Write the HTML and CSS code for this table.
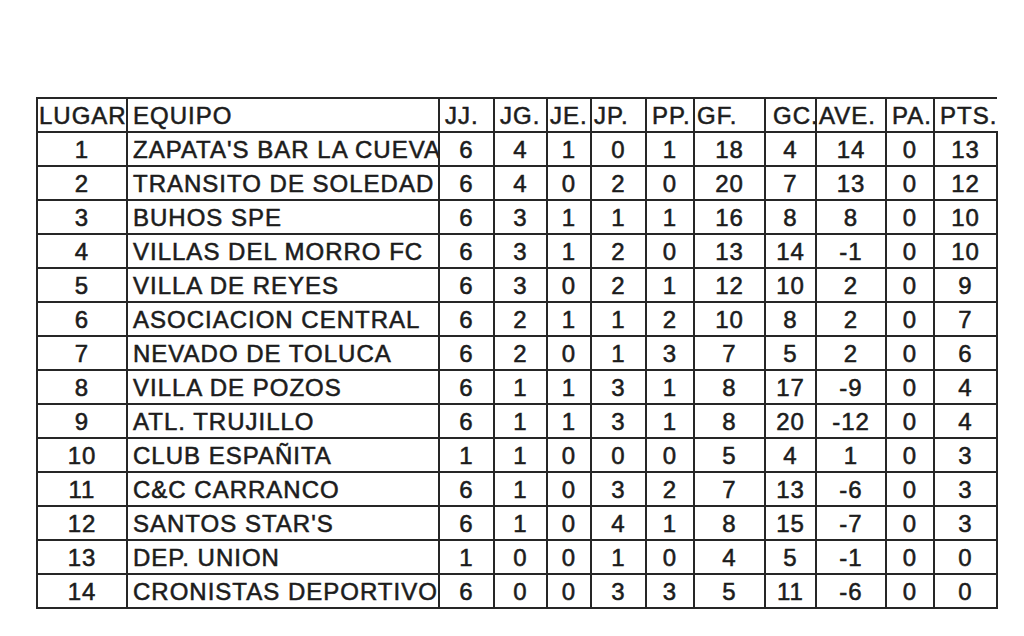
FILE: index.html
```html
<!DOCTYPE html>
<html lang="es">
<head>
<meta charset="utf-8">
<title>Tabla de posiciones</title>
<link rel="stylesheet" href="styles.css">
</head>
<body>
<div class="sheet">
  <table class="standings">
    <colgroup>
      <col class="c-pos"><col class="c-team"><col class="c-jj"><col class="c-jg"><col class="c-je"><col class="c-jp"><col class="c-pp"><col class="c-gf"><col class="c-gc"><col class="c-ave"><col class="c-pa"><col class="c-pts">
    </colgroup>
    <thead>
      <tr>
        <th class="h-pos">LUGAR</th><th>EQUIPO</th><th>JJ.</th><th>JG.</th><th class="h-tight">JE.</th><th class="h-tight">JP.</th><th>PP.</th><th class="h-tight">GF.</th><th class="h-gc">GC.</th><th class="h-tight">AVE.</th><th>PA.</th><th class="h-last">PTS.</th>
      </tr>
    </thead>
    <tbody>
      <tr><td>1</td><td class="team">ZAPATA'S BAR LA CUEVA</td><td>6</td><td>4</td><td>1</td><td>0</td><td>1</td><td>18</td><td>4</td><td>14</td><td>0</td><td>13</td></tr>
      <tr><td>2</td><td class="team">TRANSITO DE SOLEDAD</td><td>6</td><td>4</td><td>0</td><td>2</td><td>0</td><td>20</td><td>7</td><td>13</td><td>0</td><td>12</td></tr>
      <tr><td>3</td><td class="team">BUHOS SPE</td><td>6</td><td>3</td><td>1</td><td>1</td><td>1</td><td>16</td><td>8</td><td>8</td><td>0</td><td>10</td></tr>
      <tr><td>4</td><td class="team">VILLAS DEL MORRO FC</td><td>6</td><td>3</td><td>1</td><td>2</td><td>0</td><td>13</td><td>14</td><td>-1</td><td>0</td><td>10</td></tr>
      <tr><td>5</td><td class="team">VILLA DE REYES</td><td>6</td><td>3</td><td>0</td><td>2</td><td>1</td><td>12</td><td>10</td><td>2</td><td>0</td><td>9</td></tr>
      <tr><td>6</td><td class="team">ASOCIACION CENTRAL</td><td>6</td><td>2</td><td>1</td><td>1</td><td>2</td><td>10</td><td>8</td><td>2</td><td>0</td><td>7</td></tr>
      <tr><td>7</td><td class="team">NEVADO DE TOLUCA</td><td>6</td><td>2</td><td>0</td><td>1</td><td>3</td><td>7</td><td>5</td><td>2</td><td>0</td><td>6</td></tr>
      <tr><td>8</td><td class="team">VILLA DE POZOS</td><td>6</td><td>1</td><td>1</td><td>3</td><td>1</td><td>8</td><td>17</td><td>-9</td><td>0</td><td>4</td></tr>
      <tr><td>9</td><td class="team">ATL. TRUJILLO</td><td>6</td><td>1</td><td>1</td><td>3</td><td>1</td><td>8</td><td>20</td><td>-12</td><td>0</td><td>4</td></tr>
      <tr><td>10</td><td class="team">CLUB ESPAÑITA</td><td>1</td><td>1</td><td>0</td><td>0</td><td>0</td><td>5</td><td>4</td><td>1</td><td>0</td><td>3</td></tr>
      <tr><td>11</td><td class="team">C&amp;C CARRANCO</td><td>6</td><td>1</td><td>0</td><td>3</td><td>2</td><td>7</td><td>13</td><td>-6</td><td>0</td><td>3</td></tr>
      <tr><td>12</td><td class="team">SANTOS STAR'S</td><td>6</td><td>1</td><td>0</td><td>4</td><td>1</td><td>8</td><td>15</td><td>-7</td><td>0</td><td>3</td></tr>
      <tr><td>13</td><td class="team">DEP. UNION</td><td>1</td><td>0</td><td>0</td><td>1</td><td>0</td><td>4</td><td>5</td><td>-1</td><td>0</td><td>0</td></tr>
      <tr><td>14</td><td class="team">CRONISTAS DEPORTIVO</td><td>6</td><td>0</td><td>0</td><td>3</td><td>3</td><td>5</td><td>11</td><td>-6</td><td>0</td><td>0</td></tr>
    </tbody>
  </table>
</div>
</body>
</html>
```

FILE: styles.css
```css
html, body {
  margin: 0;
  padding: 0;
  background: #ffffff;
}

.sheet {
  padding: 97px 0 0 36px;
}

.standings {
  border-collapse: collapse;
  table-layout: fixed;
  width: 960px;
  font-family: "Liberation Sans", Arial, sans-serif;
  font-size: 24px;
  letter-spacing: 1px;
  color: #1c1c1c;
  -webkit-text-stroke: 0.55px #1c1c1c;
}

.c-pos { width: 90px; }
.c-team { width: 312px; }
.c-jj { width: 55px; }
.c-jg { width: 53px; }
.c-je { width: 44px; }
.c-jp { width: 55px; }
.c-pp { width: 48px; }
.c-gf { width: 71px; }
.c-gc { width: 51px; }
.c-ave { width: 70px; }
.c-pa { width: 48px; }
.c-pts { width: 63px; }

.standings tr {
  height: 34px;
}

.standings th,
.standings td {
  border: 2px solid #262626;
  padding: 0;
  white-space: nowrap;
  line-height: 30px;
}

.standings th {
  font-weight: normal;
  text-align: left;
  padding-left: 5px;
  overflow: visible;
  padding-top: 2px;
}

.standings th.h-pos {
  padding-left: 1px;
}

.standings th.h-tight {
  padding-left: 2px;
}

.standings th.h-gc {
  padding-left: 7px;
}

.standings th.h-last {
  border-right: 0;
}

.standings td {
  text-align: center;
  overflow: hidden;
  padding-top: 1px;
}

.standings td.team {
  text-align: left;
  padding-left: 5px;
  text-overflow: clip;
}
```
